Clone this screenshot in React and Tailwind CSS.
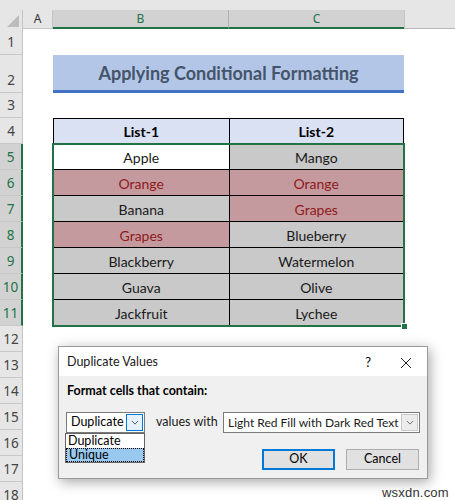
import React from "react";

const rowHeights = [26, 38, 25, 26, 26, 26, 26, 26, 26, 26, 26, 26, 26, 26, 26, 26, 26, 26];

const data = [
  { a: "Apple", b: "Mango", aRed: false, bRed: false, active: true },
  { a: "Orange", b: "Orange", aRed: true, bRed: true },
  { a: "Banana", b: "Grapes", aRed: false, bRed: true },
  { a: "Grapes", b: "Blueberry", aRed: true, bRed: false },
  { a: "Blackberry", b: "Watermelon" },
  { a: "Guava", b: "Olive" },
  { a: "Jackfruit", b: "Lychee" },
];

const ui = { fontFamily: '"Noto Sans", "Open Sans", sans-serif' };
const seg = { fontFamily: 'Lato, "Noto Sans", sans-serif' };
const cal = { fontFamily: 'Lato, "Open Sans", sans-serif' };

function Chevron({ className }) {
  return (
    <svg viewBox="0 0 10 6" className={className} fill="none" stroke="currentColor" strokeWidth="1">
      <path d="M1 1l4 4 4-4" />
    </svg>
  );
}

function Cell({ text, red, active, wide }) {
  const bg = active ? "bg-white" : red ? "bg-[#c59a9e]" : "bg-[#c9c9c9]";
  return (
    <div
      className={`${wide ? "w-[176px]" : "w-[175px]"} h-[26px] border-r border-b border-black ${bg} flex items-center justify-center pt-[1px] text-[14px] ${
        red ? "text-[#8f1a20]" : "text-[#1a1a1a]"
      }`}
      style={cal}
    >
      {text}
    </div>
  );
}

export default function App() {
  return (
    <div className="relative w-[455px] h-[500px] overflow-hidden bg-white">
      {/* top strip */}
      <div className="h-[10px] bg-[#e6e6e6]" />

      {/* column headers */}
      <div className="flex h-[19px] bg-[#e6e6e6] text-[12px]" style={ui}>
        <div className="w-[23px] border-r border-[#c4c4c4] flex items-end justify-end pr-[3px] pb-[2px]">
          <div className="w-0 h-0 border-l-[12px] border-l-transparent border-b-[12px] border-b-[#bcbcbc]" />
        </div>
        <div className="w-[30px] border-r border-[#c4c4c4] border-b border-b-[#c4c4c4] flex items-center justify-center text-[#333]">
          A
        </div>
        <div className="w-[176px] bg-[#d2d2d2] border-r border-[#b0b0b0] border-b-2 border-b-[#217346] flex items-center justify-center text-[#217346]">
          B
        </div>
        <div className="w-[175px] bg-[#d2d2d2] border-b-2 border-b-[#217346] flex items-center justify-center text-[#217346]">
          C
        </div>
        <div className="flex-1 border-l border-[#c4c4c4] border-b border-b-[#b8b8b8]" />
      </div>

      <div className="flex">
        {/* row headers */}
        <div className="w-[23px] flex flex-col" style={ui}>
          {rowHeights.map((h, i) => {
            const sel = i >= 4 && i <= 10;
            return (
              <div
                key={i}
                style={{ height: h }}
                className={`flex items-end justify-center pb-[3px] text-[13.5px] leading-[18px] border-b border-[#c8c8c8] ${
                  sel
                    ? "bg-[#d2d2d2] text-[#217346] border-r-2 border-r-[#217346]"
                    : "bg-[#e6e6e6] text-[#444] border-r border-r-[#c4c4c4]"
                }`}
              >
                {String(i + 1)}
              </div>
            );
          })}
        </div>

        {/* column A */}
        <div className="w-[30px]" />

        {/* columns B:C */}
        <div className="w-[351px] flex flex-col">
          <div className="h-[26px]" />
          <div
            className="h-[38px] bg-[#b4c6e7] border-b-[3px] border-[#4472c4] flex items-center justify-center pt-[2px] text-[18px] font-bold text-[#44546a]"
            style={cal}
          >
            Applying Conditional Formatting
          </div>
          <div className="h-[25px]" />
          <div className="flex border-t border-l border-black" style={cal}>
            <div className="w-[176px] h-[25px] border-r border-b border-black bg-[#d9e1f2] flex items-center justify-center text-[14px] font-bold text-black">
              List-1
            </div>
            <div className="w-[175px] h-[25px] border-r border-b border-black bg-[#d9e1f2] flex items-center justify-center text-[14px] font-bold text-black">
              List-2
            </div>
          </div>
          <div className="relative border-l border-black outline-2 outline-[#217346] -outline-offset-1">
            {data.map((r, i) => (
              <div key={i} className="flex">
                <Cell text={r.a} red={r.aRed} active={r.active} wide />
                <Cell text={r.b} red={r.bRed} />
              </div>
            ))}
            <div className="absolute -right-[4px] -bottom-[4px] w-[7px] h-[7px] bg-[#217346] border border-white" />
          </div>
        </div>
        <div className="flex-1" />
      </div>

      {/* dialog */}
      <div
        className="absolute left-[58px] top-[346px] w-[370px] h-[133px] bg-[#f0f0f0] border border-[#9a9a9a] shadow-[2px_3px_12px_rgba(0,0,0,0.35)] text-[12px] text-black whitespace-nowrap"
        style={seg}
      >
        <div className="h-[29px] bg-white flex items-center justify-between pl-[8px] pr-[16px] pt-[2px] text-[12.5px]">
          <span className="text-[#1a1a1a]">Duplicate Values</span>
          <div className="flex items-center gap-[30px]">
            <span className="text-[13px]">?</span>
            <svg viewBox="0 0 10 10" className="w-[10px] h-[10px]" stroke="#222" strokeWidth="1">
              <path d="M0 0l10 10M10 0L0 10" />
            </svg>
          </div>
        </div>
        <div className="px-[7px]">
          <div className="mt-[7px] font-bold leading-[16px] pl-[1px] text-[12.5px]">Format cells that contain:</div>
          <div className="mt-[13px] flex items-center h-[21px] text-[12.5px]">
            <div className="w-[79px] h-[21px] bg-white border border-[#7a7a7a] flex items-center justify-between pl-[4px] pr-[1px]">
              <span>Duplicate</span>
              <div className="w-[17px] h-[17px] border border-[#0078d7] bg-[#e5f1fb] flex items-center justify-center text-[#333]">
                <Chevron className="w-[8px] h-[5px]" />
              </div>
            </div>
            <span className="ml-[11px] w-[58px] text-[#1a1a1a]">values with</span>
            <div className="ml-[9px] w-[197px] h-[21px] bg-white border border-[#7a7a7a] flex items-center justify-between pl-[4px] pr-[1px]">
              <span className="text-[#1a1a1a] text-[12px]">Light Red Fill with Dark Red Text</span>
              <div className="w-[17px] h-[17px] border border-[#c8c8c8] bg-[#ececec] flex items-center justify-center text-[#555]">
                <Chevron className="w-[8px] h-[5px]" />
              </div>
            </div>
          </div>
          <div className="mt-[16px] flex justify-end gap-[11px] pr-[1px] text-[12.5px]">
            <div className="w-[73px] h-[21px] bg-[#e1e1e1] border-2 border-[#0078d7] flex items-center justify-center">
              OK
            </div>
            <div className="w-[73px] h-[21px] bg-[#e1e1e1] border border-[#adadad] flex items-center justify-center">
              Cancel
            </div>
          </div>
        </div>

        {/* open dropdown list */}
        <div className="absolute left-[6px] top-[86px] w-[80px] h-[30px] bg-white border border-[#646464] text-[12.5px] leading-[12px] flex flex-col">
          <div className="h-[14px] pl-[2px] flex items-center">Duplicate</div>
          <div className="h-[14px] pl-[2px] bg-[#99c9ef] border border-dotted border-black flex items-center">Unique</div>
        </div>
      </div>

      {/* watermark */}
      <div
        className="absolute left-[382px] top-[483px] text-[13px] text-[#333] tracking-[0.2px]"
        style={{ fontFamily: '"Liberation Sans", Arial, sans-serif' }}
      >
        wsxdn.com
      </div>
    </div>
  );
}
